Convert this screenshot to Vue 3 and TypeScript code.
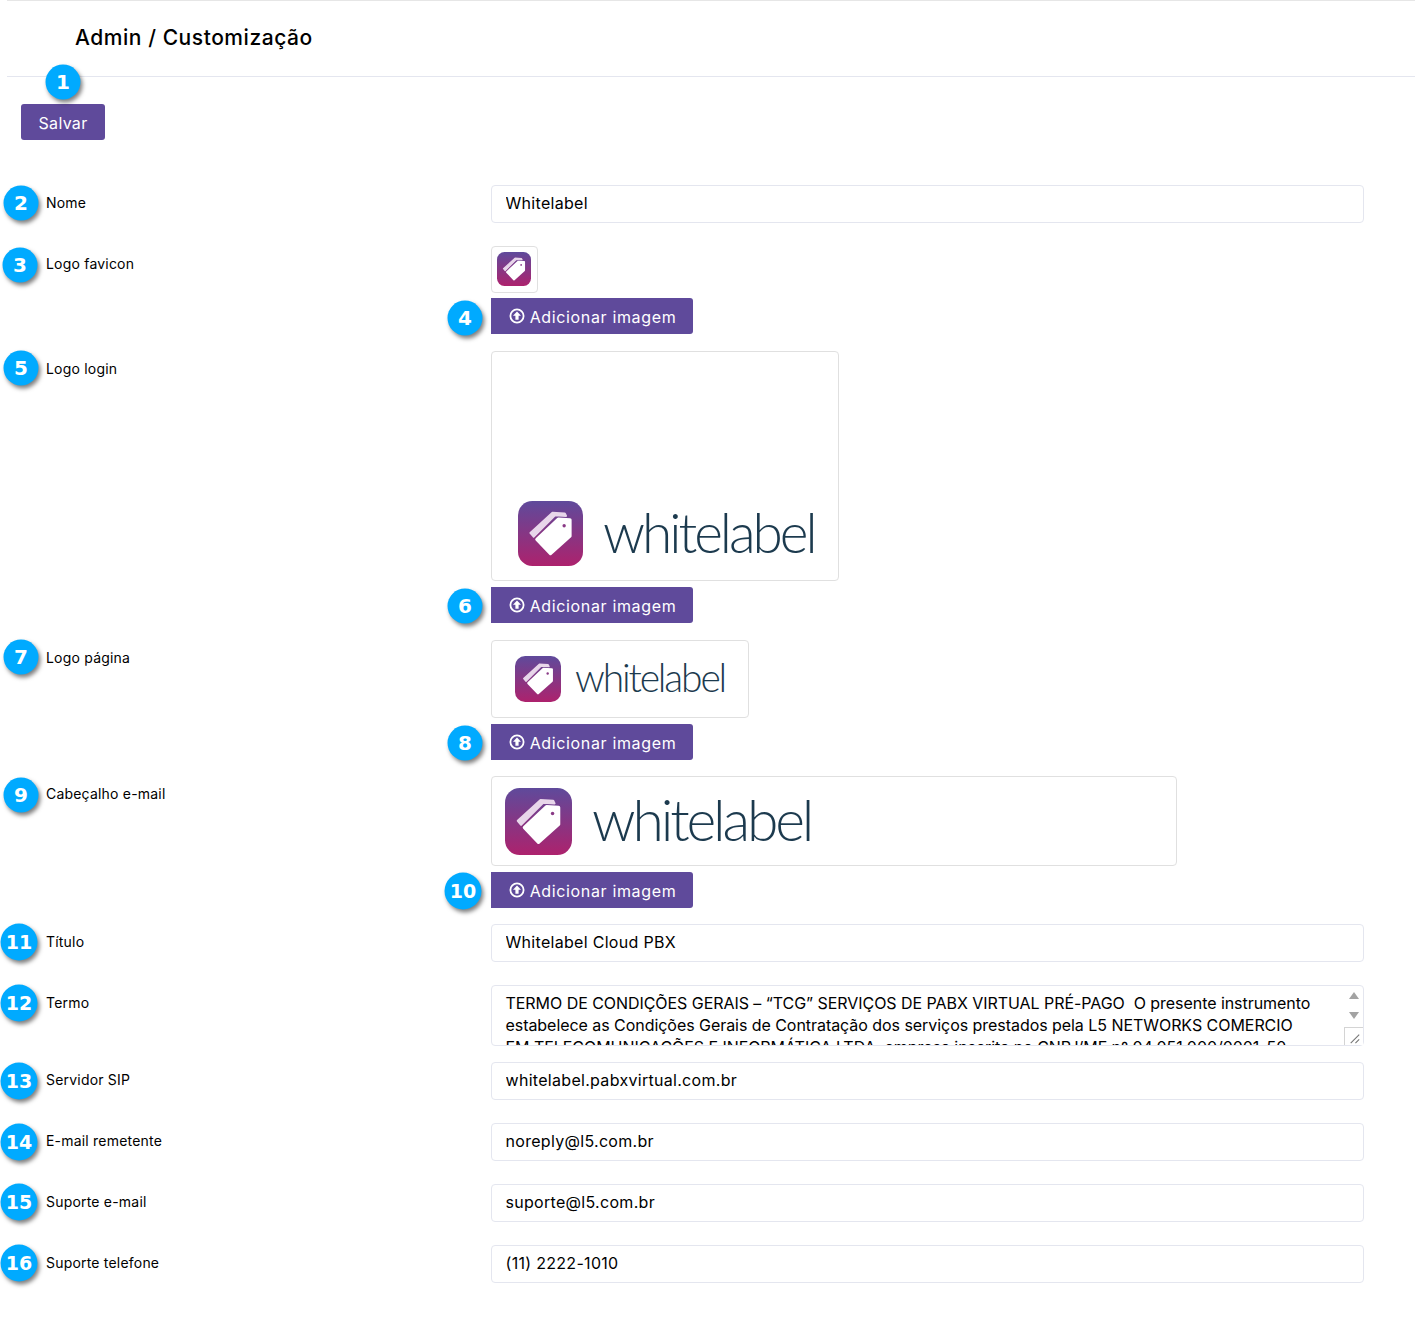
<script setup lang="ts">
import { ref } from "vue";

type Row = {
  label: string;
  kind: "input" | "image" | "textarea";
  mark: number;
  markY: number;
  markX: number;
  value?: string;
  size?: string;
  wordmark?: boolean;
  btnMark?: number;
  btnMarkX?: number;
  btnMarkY?: number;
  gap: string;
};

const termo = ref(
  "TERMO DE CONDIÇÕES GERAIS – “TCG” SERVIÇOS DE PABX VIRTUAL PRÉ-PAGO  O presente instrumento\n" +
    "estabelece as Condições Gerais de Contratação dos serviços prestados pela L5 NETWORKS COMERCIO\n" +
    "EM TELECOMUNICAÇÕES E INFORMÁTICA LTDA, empresa inscrita no CNPJ/MF nº 04.051.000/0001-50,\n" +
    "com sede na cidade de São Paulo, doravante denominada simplesmente CONTRATADA."
);

const rows = ref<Row[]>([
  { label: "Nome", kind: "input", value: "Whitelabel", mark: 2, markX: 21, markY: 18, gap: "gap-l" },
  { label: "Logo favicon", kind: "image", size: "box-fav", mark: 3, markX: 20, markY: 19, btnMark: 4, btnMarkX: 465, btnMarkY: 72, gap: "gap-m" },
  { label: "Logo login", kind: "image", size: "box-login", wordmark: true, mark: 5, markX: 21, markY: 17, btnMark: 6, btnMarkX: 465, btnMarkY: 255, gap: "gap-m" },
  { label: "Logo página", kind: "image", size: "box-page", wordmark: true, mark: 7, markX: 21, markY: 17, btnMark: 8, btnMarkX: 465, btnMarkY: 103, gap: "gap-s" },
  { label: "Cabeçalho e-mail", kind: "image", size: "box-mail", wordmark: true, mark: 9, markX: 21, markY: 19, btnMark: 10, btnMarkX: 463, btnMarkY: 115, gap: "gap-s" },
  { label: "Título", kind: "input", value: "Whitelabel Cloud PBX", mark: 11, markX: 19, markY: 18, gap: "gap-l" },
  { label: "Termo", kind: "textarea", mark: 12, markX: 19, markY: 18, gap: "gap-s" },
  { label: "Servidor SIP", kind: "input", value: "whitelabel.pabxvirtual.com.br", mark: 13, markX: 19, markY: 19, gap: "gap-l" },
  { label: "E-mail remetente", kind: "input", value: "noreply@l5.com.br", mark: 14, markX: 19, markY: 19, gap: "gap-l" },
  { label: "Suporte e-mail", kind: "input", value: "suporte@l5.com.br", mark: 15, markX: 19, markY: 18, gap: "gap-l" },
  { label: "Suporte telefone", kind: "input", value: "(11) 2222-1010", mark: 16, markX: 19, markY: 18, gap: "gap-l" },
]);
</script>

<template>
  <div class="page">
    <svg class="defs" width="0" height="0" aria-hidden="true">
      <defs>
        <linearGradient id="mark-fill" x1="0" y1="0" x2="0" y2="1">
          <stop offset="0" stop-color="#5f4a9b" />
          <stop offset="1" stop-color="#ad226d" />
        </linearGradient>
        <symbol id="logo-mark" viewBox="0 0 100 100">
          <rect width="100" height="100" rx="22" fill="url(#mark-fill)" />
          <path d="M19 49 L53 18 L72 19 L74 23 L57 22 L24 55 Z" fill="#e8d6ea" stroke="#e8d6ea" stroke-width="3" stroke-linejoin="round" />
          <path d="M29 59 L62 28 L80 29 L80 54 L50 81 Z" fill="#fff" stroke="#fff" stroke-width="5" stroke-linejoin="round" />
          <circle cx="71" cy="38" r="2.6" fill="#8a3a86" />
        </symbol>
      </defs>
    </svg>

    <header class="topbar">
      <h1>Admin / Customização</h1>
    </header>

    <div class="toolbar">
      <span class="mark" style="left: 63px; top: 5px">1</span>
      <button class="btn btn-save" type="button">Salvar</button>
    </div>

    <form class="form" @submit.prevent>
      <div v-for="row in rows" :key="row.label" class="row" :class="row.gap">
        <span
          class="mark"
          :class="{ 'mark-wide': row.mark > 9 }"
          :style="{ left: row.markX + 'px', top: row.markY + 'px' }"
          >{{ row.mark }}</span
        >
        <label class="row-label">{{ row.label }}</label>

        <div class="row-field">
          <input v-if="row.kind === 'input'" v-model="row.value" class="control" type="text" />

          <div v-else-if="row.kind === 'textarea'" class="area-wrap">
            <textarea v-model="termo" class="control control-area"></textarea>
            <span class="arrow arrow-up"></span>
            <span class="arrow arrow-down"></span>
            <svg class="resizer" viewBox="0 0 19 18">
              <path d="M6 16 L15 7 M11 16 L15 12" stroke="#777" stroke-width="1.2" fill="none" />
            </svg>
          </div>

          <template v-else>
            <div class="img-box" :class="row.size">
              <svg class="logo-mark"><use href="#logo-mark" /></svg>
              <span v-if="row.wordmark" class="wordmark">whitelabel</span>
            </div>
            <button class="btn btn-add" type="button">
              <svg class="up-icon" viewBox="0 0 16 16">
                <circle cx="8" cy="8" r="6.6" fill="none" stroke="#fff" stroke-width="1.8" />
                <path d="M8 3.4 L12 7.8 H9.6 V11.8 H6.4 V7.8 H4 Z" fill="#fff" />
              </svg>
              Adicionar imagem
            </button>
            <span
              class="mark"
              :class="{ 'mark-wide': (row.btnMark ?? 0) > 9 }"
              :style="{ left: row.btnMarkX + 'px', top: row.btnMarkY + 'px' }"
              >{{ row.btnMark }}</span
            >
          </template>
        </div>
      </div>
    </form>
  </div>
</template>

<style scoped>
.page {
  position: relative;
  height: 1328px;
  overflow: hidden;
  font-family: Inter, "Open Sans", sans-serif;
  color: #000;
  background: #fff;
}

.defs {
  position: absolute;
}

.topbar {
  height: 75px;
  margin-left: 7px;
  padding-left: 68px;
  border-top: 1px solid #e6e6e6;
  border-bottom: 1px solid #e4e6ef;
}

.topbar h1 {
  margin: 0;
  padding-top: 22px;
  font-size: 21px;
  line-height: 30px;
  font-weight: 500;
  letter-spacing: 0.55px;
  color: #000;
}

.toolbar {
  position: relative;
  height: 108px;
  padding: 27px 0 0 21px;
  box-sizing: border-box;
}

.btn {
  display: inline-flex;
  align-items: center;
  justify-content: center;
  padding: 2px 0 0;
  border: 0;
  border-radius: 3px;
  background: #5f4a9b;
  color: #fff;
  font-family: inherit;
  font-size: 16px;
  line-height: 24px;
}

.btn-save {
  width: 84px;
  height: 36px;
  letter-spacing: 0.3px;
}

.btn-add {
  width: 202px;
  height: 36px;
  margin-top: 6px;
  gap: 5px;
  border-radius: 0 3px 3px 0;
  letter-spacing: 0.65px;
}

.box-fav + .btn-add {
  margin-top: 5px;
}

.up-icon {
  width: 16px;
  height: 16px;
  flex: none;
  margin: -3px 0 0 1px;
}

.row {
  position: relative;
  display: grid;
  grid-template-columns: 491px 873px;
  align-items: start;
}

.gap-l {
  margin-bottom: 23px;
}

.gap-m {
  margin-bottom: 17px;
}

.gap-s {
  margin-bottom: 16px;
}

.row-label {
  padding: 9px 0 0 46px;
  font-size: 14px;
  line-height: 18px;
  letter-spacing: 0.2px;
}

.row-field {
  display: flex;
  flex-direction: column;
  align-items: flex-start;
}

.control {
  width: 100%;
  height: 38px;
  box-sizing: border-box;
  padding: 0 13.5px 2px;
  border: 1px solid #e4e6ef;
  border-radius: 4px;
  background: #fff;
  font-family: inherit;
  font-size: 16px;
  letter-spacing: 0.3px;
  color: #000;
  outline: none;
}

.area-wrap {
  position: relative;
  width: 100%;
}

.control-area {
  display: block;
  height: 61px;
  padding: 6px 13.5px;
  line-height: 22px;
  letter-spacing: -0.05px;
  white-space: pre;
  overflow: hidden;
  resize: none;
}

.arrow {
  position: absolute;
  right: 5px;
  width: 0;
  height: 0;
  border-left: 5px solid transparent;
  border-right: 5px solid transparent;
}

.arrow-up {
  top: 7px;
  border-bottom: 7px solid #a3a3a3;
}

.arrow-down {
  top: 27px;
  border-top: 7px solid #a3a3a3;
}

.resizer {
  position: absolute;
  right: 1px;
  bottom: 1px;
  width: 19px;
  height: 18px;
  box-sizing: border-box;
  border-left: 1px solid #d4d4d4;
  border-top: 1px solid #d4d4d4;
  background: #fff;
}

.img-box {
  display: flex;
  box-sizing: border-box;
  border: 1px solid #e0e0e0;
  border-radius: 4px;
}

.box-fav {
  width: 47px;
  height: 47px;
  align-items: center;
  justify-content: center;
  padding: 0 1px 1px 0;
  --mark: 34px;
}

.box-login {
  width: 348px;
  height: 230px;
  align-items: flex-end;
  gap: 20px;
  padding: 0 0 14px 26px;
  --mark: 65px;
  --word: 55px;
}

.box-page {
  width: 258px;
  height: 78px;
  align-items: center;
  gap: 14px;
  padding-left: 23px;
  --mark: 46px;
  --word: 39px;
}

.box-mail {
  width: 686px;
  height: 90px;
  align-items: center;
  gap: 20px;
  padding-left: 13px;
  --mark: 67px;
  --word: 57px;
}

.logo-mark {
  width: var(--mark);
  height: var(--mark);
  flex: none;
}

.wordmark {
  align-self: center;
  margin-bottom: 4px;
  font-family: Lato, sans-serif;
  font-weight: 300;
  font-size: var(--word);
  line-height: 1;
  letter-spacing: -0.055em;
  color: #1c3a4e;
}

.box-login .wordmark {
  align-self: flex-end;
  margin-bottom: 0;
  padding-bottom: 6px;
}

.mark {
  position: absolute;
  z-index: 2;
  display: flex;
  align-items: center;
  justify-content: center;
  width: 35px;
  height: 35px;
  padding-bottom: 1px;
  box-sizing: border-box;
  border-radius: 50%;
  transform: translate(-50%, -50%);
  background: #00aaff;
  box-shadow: 2px 3px 4px rgba(0, 0, 0, 0.5);
  color: #fff;
  font-family: "DejaVu Sans", sans-serif;
  font-weight: 700;
  font-size: 20px;
  line-height: 1;
}

.mark-wide {
  width: 37px;
  height: 37px;
  font-size: 19px;
}
</style>

<style>
html,
body {
  margin: 0;
  background: #fff;
}
</style>
